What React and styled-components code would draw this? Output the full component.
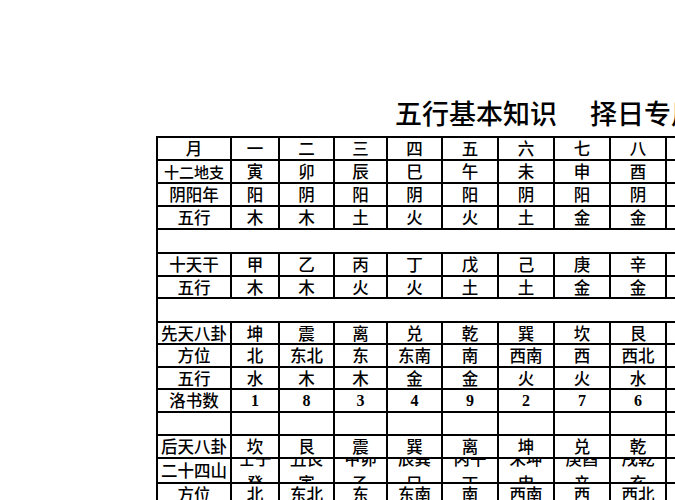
import React from "react";
import styled, { createGlobalStyle } from "styled-components";

const GlobalStyle = createGlobalStyle`
  html, body {
    margin: 0;
    padding: 0;
    background: #fff;
    overflow: hidden;
  }
  body {
    font-family: "Noto Sans CJK SC", "Noto Sans", sans-serif;
    color: #000;
  }
`;

const Page = styled.div`
  width: 675px;
  height: 500px;
  overflow: hidden;
  padding-left: 156px;
  box-sizing: border-box;
`;

const Title = styled.h1`
  display: flex;
  gap: 33px;
  margin: 99px 0 10px 239px;
  height: 27px;
  font-size: 27px;
  line-height: 27px;
  font-weight: 500;
  white-space: nowrap;
`;

const Sheet = styled.div`
  display: flex;
  flex-direction: column;
  width: max-content;
  border-left: 2px solid #000;
  border-top: 2px solid #000;
`;

const Row = styled.div`
  display: flex;
  height: ${({ $h }) => $h}px;
`;

const Cell = styled.div`
  box-sizing: border-box;
  flex: none;
  width: ${({ $w }) => $w}px;
  height: 100%;
  border-right: ${({ $open }) => ($open ? "none" : "2px solid #000")};
  border-bottom: 2px solid #000;
  display: flex;
  align-items: center;
  justify-content: center;
  overflow: ${({ $clip }) => ($clip ? "hidden" : "visible")};
  font-size: ${({ $size }) => $size || 16.5}px;
  font-weight: 500;
  line-height: 1;
  white-space: nowrap;
`;

const Num = styled.span`
  font-family: "Liberation Serif", "Times New Roman", serif;
  font-weight: 700;
  font-size: 16px;
`;

const Wrapped = styled.span`
  display: block;
  flex: none;
  width: 35px;
  white-space: normal;
  text-align: center;
  line-height: 25px;
  font-size: 16.5px;
`;

const widths = [74, 48, 55, 53, 55, 56, 56, 56, 56, 56, 56, 56, 56];
const total = widths.reduce((a, b) => a + b, 0);

const pad = (arr) => [...arr, ...Array(12 - arr.length).fill("")];

const rows = [
  { h: 23, label: "月", cells: ["一", "二", "三", "四", "五", "六", "七", "八", "九", "十", "十一", "十二"] },
  { h: 23, label: "十二地支", size: 15, cells: ["寅", "卯", "辰", "巳", "午", "未", "申", "酉", "戌", "亥", "子", "丑"] },
  { h: 23, label: "阴阳年", cells: ["阳", "阴", "阳", "阴", "阳", "阴", "阳", "阴", "阳", "阴", "阳", "阴"] },
  { h: 23, label: "五行", cells: ["木", "木", "土", "火", "火", "土", "金", "金", "土", "水", "水", "土"] },
  { h: 24, blank: true },
  { h: 23, label: "十天干", cells: pad(["甲", "乙", "丙", "丁", "戊", "己", "庚", "辛", "壬", "癸"]) },
  { h: 22, label: "五行", cells: pad(["木", "木", "火", "火", "土", "土", "金", "金", "水", "水"]) },
  { h: 24, blank: true },
  { h: 22, label: "先天八卦", cells: pad(["坤", "震", "离", "兑", "乾", "巽", "坎", "艮"]) },
  { h: 23, label: "方位", cells: pad(["北", "东北", "东", "东南", "南", "西南", "西", "西北"]) },
  { h: 22, label: "五行", cells: pad(["水", "木", "木", "金", "金", "火", "火", "水"]) },
  { h: 23, label: "洛书数", num: true, cells: pad(["1", "8", "3", "4", "9", "2", "7", "6"]) },
  { h: 23, label: "", cells: pad([]) },
  { h: 23, label: "后天八卦", cells: pad(["坎", "艮", "震", "巽", "离", "坤", "兑", "乾"]) },
  { h: 25, label: "二十四山", wrap: true, cells: pad(["壬子癸", "丑艮寅", "甲卯乙", "辰巽巳", "丙午丁", "未坤申", "庚酉辛", "戌乾亥"]) },
  { h: 23, label: "方位", cells: pad(["北", "东北", "东", "东南", "南", "西南", "西", "西北"]) },
];

function renderValue(row, v) {
  if (!v) return null;
  if (row.num) return <Num>{v}</Num>;
  if (row.wrap) return <Wrapped>{v}</Wrapped>;
  return v;
}

export default function App() {
  return (
    <Page>
      <GlobalStyle />
      <Title>
        <span>五行基本知识</span>
        <span>择日专用</span>
      </Title>
      <Sheet>
        {rows.map((row, i) =>
          row.blank ? (
            <Row key={i} $h={row.h}>
              <Cell $w={total} $open />
            </Row>
          ) : (
            <Row key={i} $h={row.h}>
              <Cell $w={widths[0]} $size={row.size}>
                {row.label}
              </Cell>
              {row.cells.map((v, j) => (
                <Cell key={j} $w={widths[j + 1]} $clip={row.wrap}>
                  {renderValue(row, v)}
                </Cell>
              ))}
            </Row>
          )
        )}
      </Sheet>
    </Page>
  );
}
